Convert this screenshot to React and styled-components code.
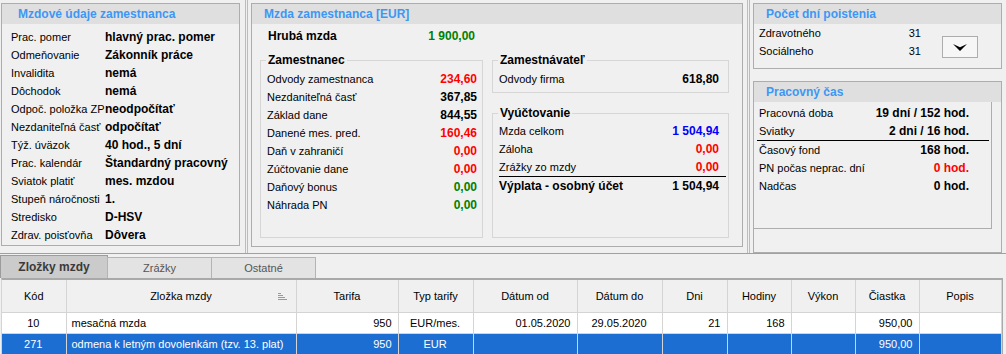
import styled, { createGlobalStyle, css } from "styled-components";

const GlobalStyle = createGlobalStyle`
  body {
    margin:0;
    background:#f0f0f0;
    font-family:"Liberation Sans", Arial, sans-serif;
    font-size:11px;
    color:#000;
  }
  * { box-sizing:border-box; }
`;

const RED = "#ff0000";
const GREEN = "#008000";
const BLUE = "#0000ff";

const employee = [
  ["Prac. pomer", "hlavný prac. pomer"],
  ["Odmeňovanie", "Zákonník práce"],
  ["Invalidita", "nemá"],
  ["Dôchodok", "nemá"],
  ["Odpoč. položka ZP", "neodpočítať"],
  ["Nezdaniteľná časť", "odpočítať"],
  ["Týž. úväzok", "40 hod., 5 dní"],
  ["Prac. kalendár", "Štandardný pracovný"],
  ["Sviatok platiť", "mes. mzdou"],
  ["Stupeň náročnosti", "1."],
  ["Stredisko", "D-HSV"],
  ["Zdrav. poisťovňa", "Dôvera"],
];

const employeeMoney = [
  ["Odvody zamestnanca", "234,60", RED],
  ["Nezdaniteľná časť", "367,85"],
  ["Základ dane", "844,55"],
  ["Danené mes. pred.", "160,46", RED],
  ["Daň v zahraničí", "0,00", RED],
  ["Zúčtovanie dane", "0,00", RED],
  ["Daňový bonus", "0,00", GREEN],
  ["Náhrada PN", "0,00", GREEN],
];

const settlement = [
  ["Mzda celkom", "1 504,94", BLUE],
  ["Záloha", "0,00", RED],
  ["Zrážky zo mzdy", "0,00", RED],
];

const workTime = [
  ["Pracovná doba", "19 dní / 152 hod.", null, false],
  ["Sviatky", "2 dni / 16 hod.", null, true],
  ["Časový fond", "168 hod.", null, false],
  ["PN počas neprac. dní", "0 hod.", RED, false],
  ["Nadčas", "0 hod.", null, false],
];

const columns = [
  { title: "Kód", w: 64, a: "center" },
  { title: "Zložka mzdy", w: 230, a: "left", sort: true },
  { title: "Tarifa", w: 102, a: "right" },
  { title: "Typ tarify", w: 75, a: "center" },
  { title: "Dátum od", w: 104, a: "right" },
  { title: "Dátum do", w: 85, a: "center" },
  { title: "Dni", w: 65, a: "right" },
  { title: "Hodiny", w: 64, a: "right" },
  { title: "Výkon", w: 64, a: "right" },
  { title: "Čiastka", w: 64, a: "right" },
  { title: "Popis", w: 82, a: "left" },
];

const rows = [
  ["10", "mesačná mzda", "950", "EUR/mes.", "01.05.2020", "29.05.2020", "21", "168", "", "950,00", ""],
  ["271", "odmena k letným dovolenkám (tzv. 13. plat)", "950", "EUR", "", "", "", "", "", "950,00", ""],
];

const App = () => {
  return (
    <Page>
      <GlobalStyle />
      <Top>
        <Column $w={245} $pl={1}>
          <Panel $w={239} $h={243}>
            <PanelHeader $pl={16}>Mzdové údaje zamestnanca</PanelHeader>
            <InfoList>
              {employee.map(([l, v]) => (
                <InfoRow key={l}>
                  <InfoLabel>{l}</InfoLabel>
                  <Strong>{v}</Strong>
                </InfoRow>
              ))}
            </InfoList>
          </Panel>
        </Column>
        <Splitter />
        <Column $w={499} $pl={3}>
          <Panel $w={492} $h={244}>
            <PanelHeader $pl={12}>Mzda zamestnanca [EUR]</PanelHeader>
            <GrossRow>
              <Strong>Hrubá mzda</Strong>
              <Strong $c={GREEN}>1 900,00</Strong>
            </GrossRow>
            <Groups>
              <GroupBox $w={223} $h={185}>
                <Legend>Zamestnanec</Legend>
                {employeeMoney.map(([l, v, c]) => (
                  <MoneyRow key={l} $pl={6} $pr={5}>
                    <span>{l}</span>
                    <Strong $c={c}>{v}</Strong>
                  </MoneyRow>
                ))}
              </GroupBox>
              <GroupColumn>
                <GroupBox $w={237} $h={40}>
                  <Legend>Zamestnávateľ</Legend>
                  <MoneyRow $pl={6} $pr={9}>
                    <span>Odvody firma</span>
                    <Strong>618,80</Strong>
                  </MoneyRow>
                </GroupBox>
                <GroupBox $w={237} $fill $mt={13}>
                  <Legend $pad={2}>Vyúčtovanie</Legend>
                  {settlement.map(([l, v, c]) => (
                    <MoneyRow key={l} $pl={6} $pr={9}>
                      <span>{l}</span>
                      <Strong $c={c}>{v}</Strong>
                    </MoneyRow>
                  ))}
                  <MoneyRow $pl={0} $pr={7} $total>
                    <Strong>Výplata - osobný účet</Strong>
                    <Strong>1 504,94</Strong>
                  </MoneyRow>
                </GroupBox>
              </GroupColumn>
            </Groups>
          </Panel>
        </Column>
        <Splitter />
        <Column $w={256} $pl={3}>
          <Panel $w={249} $h={66}>
            <PanelHeader $pl={12}>Počet dní poistenia</PanelHeader>
            <InsuranceBody>
              <InsuranceList>
                <InsuranceRow>
                  <span>Zdravotného</span>
                  <span>31</span>
                </InsuranceRow>
                <InsuranceRow>
                  <span>Sociálneho</span>
                  <span>31</span>
                </InsuranceRow>
              </InsuranceList>
              <DropButton type="button">
                <svg width="14" height="7" viewBox="0 0 14 7">
                  <polygon points="0,0 7,3.2 14,0 7,7" fill="#000" />
                </svg>
              </DropButton>
            </InsuranceBody>
          </Panel>
          <Panel $w={249} $fill $mt={12}>
            <PanelHeader $pl={12}>Pracovný čas</PanelHeader>
            <TimeBody>
              {workTime.map(([l, v, c, line]) => (
                <TimeRow key={l} $line={line}>
                  <span>{l}</span>
                  <Strong $c={c}>{v}</Strong>
                </TimeRow>
              ))}
            </TimeBody>
          </Panel>
        </Column>
      </Top>
      <TabBar>
        <Tab $active>Zložky mzdy</Tab>
        <Tab>Zrážky</Tab>
        <Tab>Ostatné</Tab>
      </TabBar>
      <TableBox>
        <Grid>
          <colgroup>
            {columns.map((c) => (
              <col key={c.title} style={{ width: c.w }} />
            ))}
          </colgroup>
          <thead>
            <tr>
              {columns.map((c) => (
                <Th key={c.title}>
                  {c.title}
                  {c.sort && (
                    <SortIcon width="9" height="7" viewBox="0 0 9 7">
                      <path d="M0 0.5h3M0 2.5h5M0 4.5h7M0 6.5h9" stroke="#9a9a9a" strokeWidth="1" />
                    </SortIcon>
                  )}
                </Th>
              ))}
            </tr>
          </thead>
          <tbody>
            {rows.map((r, i) => (
              <Tr key={r[0]} $sel={i === 1}>
                {r.map((v, j) => (
                  <Td key={j} $a={columns[j].a}>
                    {v}
                  </Td>
                ))}
              </Tr>
            ))}
          </tbody>
        </Grid>
      </TableBox>
    </Page>
  );
};

const Page = styled.div`
  width:1006px;
  height:354px;
  overflow:hidden;
  background:#f0f0f0;
`;

const Top = styled.div`
  display:flex;
  height:254px;
  border-bottom:1px solid #a0a0a0;
`;

const Column = styled.div`
  width:${(p) => p.$w}px;
  flex:none;
  display:flex;
  flex-direction:column;
  padding:3px 0 0 ${(p) => p.$pl}px;
`;

const Splitter = styled.div`
  width:3px;
  flex:none;
  border-left:1px solid #bcbcbc;
  border-right:1px solid #bcbcbc;
`;

const Panel = styled.div`
  width:${(p) => p.$w}px;
  height:${(p) => (p.$h ? `${p.$h}px` : "auto")};
  flex:${(p) => (p.$fill ? 1 : "none")};
  margin-top:${(p) => p.$mt || 0}px;
  border:1px solid #adadad;
  display:flex;
  flex-direction:column;
`;

const PanelHeader = styled.div`
  height:20px;
  line-height:20px;
  flex:none;
  background:#dfdfdf;
  color:#3d97f5;
  font-weight:bold;
  font-size:12px;
  padding-left:${(p) => p.$pl}px;
`;

const Strong = styled.span`
  font-weight:bold;
  font-size:12px;
  color:${(p) => p.$c || "#000"};
  white-space:nowrap;
`;

const InfoList = styled.div`
  padding:4px 0 0 9px;
`;

const InfoRow = styled.div`
  display:flex;
  align-items:center;
  height:18px;
  white-space:nowrap;
`;

const InfoLabel = styled.span`
  width:94px;
  flex:none;
`;

const GrossRow = styled.div`
  display:flex;
  justify-content:space-between;
  align-items:center;
  width:223px;
  height:18px;
  margin-top:3px;
  padding-left:16px;
  flex:none;
`;

const Groups = styled.div`
  display:flex;
  gap:9px;
  margin-top:8px;
  padding-left:8px;
`;

const GroupColumn = styled.div`
  display:flex;
  flex-direction:column;
  height:185px;
`;

const GroupBox = styled.fieldset`
  width:${(p) => p.$w}px;
  height:${(p) => (p.$h ? `${p.$h}px` : "auto")};
  flex:${(p) => (p.$fill ? 1 : "none")};
  margin:${(p) => p.$mt || 0}px 0 0 0;
  padding:0 0 3px 0;
  border:1px solid #d6d6d6;
  min-width:0;
`;

const Legend = styled.legend`
  font-weight:bold;
  font-size:12px;
  line-height:14px;
  padding:0 2px;
  margin-left:5px;
  margin-bottom:${(p) => (p.$pad !== undefined ? p.$pad : 3)}px;
`;

const MoneyRow = styled.div`
  display:flex;
  justify-content:space-between;
  align-items:center;
  height:18px;
  padding:0 ${(p) => p.$pr}px 0 ${(p) => p.$pl}px;
  white-space:nowrap;
  ${(p) =>
    p.$total &&
    css`
      height:19px;
      margin:0 2px 0 6px;
      border-top:1px solid #000;
    `}
`;

const InsuranceBody = styled.div`
  display:flex;
`;

const InsuranceList = styled.div`
  width:167px;
  padding-left:5px;
`;

const InsuranceRow = styled.div`
  display:flex;
  justify-content:space-between;
  align-items:center;
  height:18px;
`;

const DropButton = styled.button`
  width:36px;
  height:22px;
  margin:12px 0 0 21px;
  padding:0;
  border:1px solid #adadad;
  background:#f6f6f6;
  display:flex;
  align-items:center;
  justify-content:center;
`;

const TimeBody = styled.div`
  width:238px;
  height:127px;
  padding-top:2px;
  border-right:1px solid #adadad;
  border-bottom:1px solid #adadad;
`;

const TimeRow = styled.div`
  display:flex;
  justify-content:space-between;
  align-items:center;
  height:${(p) => (p.$line ? 19 : 18)}px;
  margin:0 2px 0 3px;
  padding:0 20px 0 2px;
  white-space:nowrap;
  border-bottom:${(p) => (p.$line ? "1px solid #000" : "none")};
`;

const TabBar = styled.div`
  display:flex;
  align-items:flex-end;
  height:24px;
`;

const Tab = styled.div`
  width:${(p) => (p.$active ? 108 : 105)}px;
  height:${(p) => (p.$active ? 23 : 21)}px;
  display:flex;
  align-items:center;
  justify-content:center;
  border:1px solid ${(p) => (p.$active ? "#9c9c9c" : "#b4b4b4")};
  border-bottom:none;
  margin-right:-1px;
  background:${(p) => (p.$active ? "#cbcbcb" : "#e3e3e3")};
  color:${(p) => (p.$active ? "#3a3a3a" : "#555")};
  font-weight:${(p) => (p.$active ? "bold" : "normal")};
  font-size:${(p) => (p.$active ? 12 : 11)}px;
`;

const TableBox = styled.div`
  margin:0 3px 0 1px;
  border-top:2px solid #a9a9a9;
  border-right:2px solid #a9a9a9;
  border-left:1px solid #d4d4d4;
`;

const Grid = styled.table`
  width:100%;
  border-collapse:collapse;
  table-layout:fixed;
  font-size:11px;
`;

const Th = styled.th`
  height:32px;
  padding:0 4px;
  font-weight:normal;
  text-align:center;
  background:#f0f0f0;
  border-right:1px solid #d4d4d4;
  border-bottom:1px solid #d4d4d4;
  position:relative;
`;

const SortIcon = styled.svg`
  position:absolute;
  right:9px;
  top:13px;
`;

const Tr = styled.tr`
  background:${(p) => (p.$sel ? "#1c6ed2" : "#fff")};
  color:${(p) => (p.$sel ? "#fff" : "#000")};
`;

const Td = styled.td`
  height:21px;
  padding:0 6px 0 5px;
  text-align:${(p) => p.$a};
  white-space:nowrap;
  overflow:hidden;
  border-right:1px solid #d4d4d4;
  border-bottom:1px solid #d4d4d4;
`;

export default App;
